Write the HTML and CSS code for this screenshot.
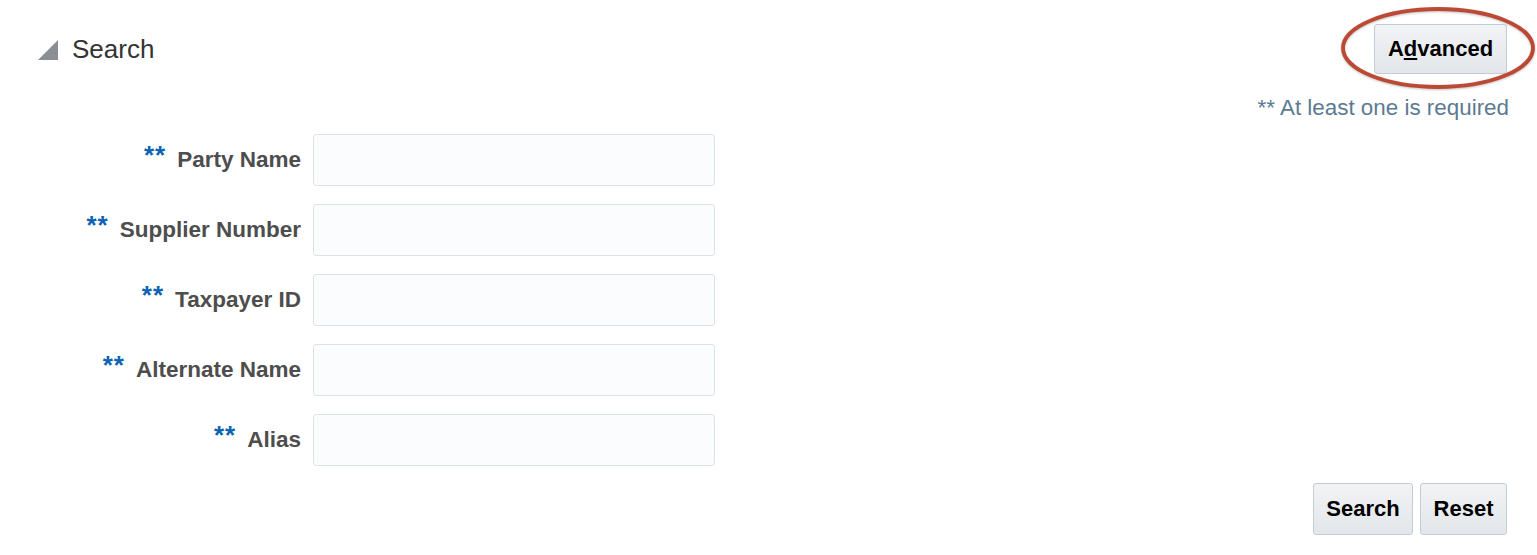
FILE: index.html
```html
<!DOCTYPE html>
<html lang="en">
<head>
    <meta charset="UTF-8">
    <title>Search</title>
    <link rel="stylesheet" href="styles.css">
</head>
<body>

    <div class="panel">
        <div class="header">
            <h1 class="title"><span class="disclosure"></span>Search</h1>
            <div class="adv-wrap">
                <button class="btn adv-btn">A<u>d</u>vanced</button>
                <svg class="circle-mark" width="197" height="86" viewBox="0 0 197 86">
                    <ellipse cx="98" cy="42" rx="95" ry="39" fill="none" stroke="#b9412b" stroke-width="3.8" opacity="0.95"/>
                </svg>
            </div>
        </div>

        <p class="note">** At least one is required</p>

        <form class="search-form">
            <label class="field-label"><span class="req">**</span>Party Name</label>
            <input class="field" type="text">

            <label class="field-label"><span class="req">**</span>Supplier Number</label>
            <input class="field" type="text">

            <label class="field-label"><span class="req">**</span>Taxpayer ID</label>
            <input class="field" type="text">

            <label class="field-label"><span class="req">**</span>Alternate Name</label>
            <input class="field" type="text">

            <label class="field-label"><span class="req">**</span>Alias</label>
            <input class="field" type="text">
        </form>

        <div class="actions">
            <button class="btn">Search</button>
            <button class="btn">Reset</button>
        </div>
    </div>

</body>
</html>
```

FILE: styles.css
```css
body {
    margin: 0;
    background: #fff;
    font-family: "Liberation Sans", Arial, sans-serif;
    color: #333;
}

.panel {
    padding: 24px 30px 0 38px;
}

.header {
    display: flex;
    justify-content: space-between;
    align-items: center;
}

.title {
    margin: 0;
    display: flex;
    align-items: center;
    font-size: 26px;
    font-weight: normal;
    color: #333;
}

.disclosure {
    width: 0;
    height: 0;
    border-left: 20px solid transparent;
    border-bottom: 20px solid #8b8f93;
    margin-right: 14px;
    margin-top: 1px;
}

.adv-wrap {
    position: relative;
}

.circle-mark {
    position: absolute;
    left: -34px;
    top: -18px;
    pointer-events: none;
    filter: drop-shadow(0 1px 1px rgba(0, 0, 0, 0.25));
}

.btn {
    font-family: "Liberation Sans", Arial, sans-serif;
    font-size: 22px;
    font-weight: bold;
    color: #000;
    background: linear-gradient(#f1f3f5, #e3e6ea);
    border: 1px solid #c3cbd3;
    border-radius: 3px;
    height: 52px;
    padding: 0 10px;
    cursor: pointer;
}

.adv-btn {
    height: 50px;
    width: 133px;
}

.note {
    margin: 21px -2px 0 0;
    text-align: right;
    font-size: 22.4px;
    line-height: 26px;
    color: #5c7a92;
}

.search-form {
    display: grid;
    grid-template-columns: 263px 402px;
    column-gap: 12px;
    row-gap: 18px;
    margin-top: 13px;
    align-items: center;
}

.field-label {
    text-align: right;
    font-size: 22.5px;
    line-height: 26px;
    font-weight: bold;
    color: #4d4d4d;
}

.req {
    color: #0b63b3;
    font-size: 26px;
    line-height: 0;
    letter-spacing: 1px;
    margin-right: 11px;
    vertical-align: 3px;
}

.field {
    height: 52px;
    box-sizing: border-box;
    border: 1px solid #dde2e7;
    border-radius: 3px;
    background: #fbfcfd;
    margin: 0;
}

.actions {
    display: flex;
    justify-content: flex-end;
    gap: 7px;
    margin-top: 17px;
}

.actions .btn:first-child {
    width: 100px;
}

.actions .btn:last-child {
    width: 87px;
}
```
